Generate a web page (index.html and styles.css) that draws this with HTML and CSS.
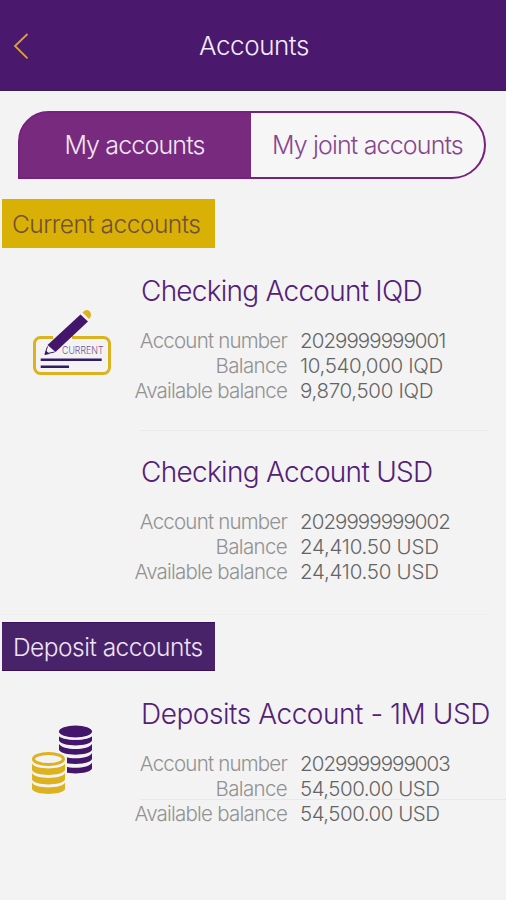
FILE: index.html
```html
<!DOCTYPE html>
<html lang="en">
<head>
<meta charset="utf-8">
<title>Accounts</title>
<link rel="stylesheet" href="styles.css">
</head>
<body>
<header class="bar">
  <svg class="back" width="18" height="28" viewBox="0 0 18 28" fill="none" stroke="#d9a23a" stroke-width="1.8"><path d="M15.500 2 3 14l12.500 12.300"/></svg>
  <h1>Accounts</h1>
</header>
<nav class="tabs">
  <a class="tab active">My accounts</a>
  <a class="tab joint">My joint accounts</a>
</nav>
<main>
  <h2 class="tag gold">Current accounts</h2>
  <section class="account first">
    <div class="icon">
      <svg width="82" height="70" viewBox="0 0 82 70">
        <path d="M22 28.500H9.500a6 6 0 0 0-6 6V58.500a6 6 0 0 0 6 6H72.500a6 6 0 0 0 6-6V34.500a6 6 0 0 0-6-6H41" fill="none" stroke="#dcb21e" stroke-width="3"/>
        <path d="M49.500 5.500 57 12.500 24.500 43 16.500 36Z" fill="#43166c"/>
        <path d="M51.500 3.500C54 0 58 0 59.500 3.500C60.500 6 60 8 58 10Z" fill="#dcb21e"/>
        <path d="M16.500 37.500 14 45 23.500 43" fill="none" stroke="#43166c" stroke-width="1"/>
        <path d="M13.500 46l1.500-4.500 3.500 3.500Z" fill="#43166c"/>
        <text x="31" y="45.300" textLength="41.500" lengthAdjust="spacingAndGlyphs" class="cheque">CURRENT</text>
        <path d="M9.700 50.700H70.700M9.700 57.700H38" stroke="#321c68" stroke-width="2.600"/>
      </svg>
    </div>
    <div class="info">
      <h3 class="n-iqd">Checking Account IQD</h3>
      <dl>
        <dt class="l-num">Account number</dt><dd class="v-num">2029999999001</dd>
        <dt class="l-bal">Balance</dt><dd class="v-iqd">10,540,000 IQD</dd>
        <dt class="l-avail">Available balance</dt><dd class="v-iqd">9,870,500 IQD</dd>
      </dl>
    </div>
  </section>
  <section class="account second">
    <div class="icon"></div>
    <div class="info">
      <h3 class="n-usd">Checking Account USD</h3>
      <dl>
        <dt class="l-num">Account number</dt><dd class="v-num">2029999999002</dd>
        <dt class="l-bal">Balance</dt><dd class="v-usd">24,410.50 USD</dd>
        <dt class="l-avail">Available balance</dt><dd class="v-usd">24,410.50 USD</dd>
      </dl>
    </div>
  </section>
  <h2 class="tag purple">Deposit accounts</h2>
  <section class="account third">
    <div class="icon coins">
      <svg width="66" height="72" viewBox="0 0 66 72">
        <g fill="#43166c">
          <ellipse cx="44.500" cy="6.500" rx="16.500" ry="6"/>
          <path id="disc" d="M28 9.500C31 16.500 58 16.500 61 9.500V15.500C58 22 31 22 28 15.500Z"/>
          <use href="#disc" y="9.300"/><use href="#disc" y="18.600"/><use href="#disc" y="28"/>
        </g>
        <g fill="none" stroke="#f3f3f3" stroke-width="1.800">
          <path id="gap" d="M27 9C31 15.500 58 15.500 62 9"/>
        </g>
        <path d="M-1 33C-1 24 36 24 36 33V72H-1Z" fill="#f3f3f3"/>
        <g fill="#dcb21e">
          <ellipse cx="17.500" cy="34" rx="15" ry="5.500" fill="#f3f3f3" stroke="#dcb21e" stroke-width="3"/>
          <path id="gold-disc" d="M1 38.500C4 45 31 45 34 38.500V45C31 51.500 4 51.500 1 45Z"/>
          <use href="#gold-disc" y="9.500"/><use href="#gold-disc" y="19"/>
        </g>
      </svg>
    </div>
    <div class="info">
      <h3 class="n-dep">Deposits Account - 1M USD</h3>
      <dl>
        <dt class="l-num">Account number</dt><dd class="v-num">2029999999003</dd>
        <dt class="l-bal">Balance</dt><dd class="v-usd-large">54,500.00 USD</dd>
        <dt class="l-avail">Available balance</dt><dd class="v-usd-large">54,500.00 USD</dd>
      </dl>
    </div>
  </section>
</main>
</body>
</html>
```
FILE: styles.css
```css
* { box-sizing: border-box; }
body { margin: 0; height: 900px; overflow: hidden; background: #f3f3f3; font-family: Inter, "Liberation Sans", sans-serif; font-weight: 300; }
h1, h2, h3, dl, dd { margin: 0; font-weight: 300; white-space: nowrap; }

.bar { display: grid; grid-template-columns: 48px 1fr 46px; align-items: center; height: 91px; background: #4a186c; border-bottom: 1px solid #392052; }
.back { margin-left: 12px; margin-top: 2px; }
h1 { padding-top: 2px; text-align: center; font-size: 26px; line-height: 36px; letter-spacing: -0.450px; color: #f3eaf8; }

.tabs { display: flex; width: 468px; height: 68px; margin: 20px 0 0 18px; border: 2px solid #762080; border-radius: 34px 38px 38px 0; background: linear-gradient(to right, #782b7e 233px, #f6f6f6 233px) border-box; color: #f3e6f5; font-size: 25px; }
.tab { display: flex; align-items: center; justify-content: center; padding-bottom: 1px; white-space: nowrap; letter-spacing: -0.850px; }
.active { width: 231px; padding-right: 2px; }
.joint { flex: 1; color: #87468d; }

.tag { display: flex; align-items: center; width: 213px; height: 49px; margin-left: 2px; padding-left: 10px; font-size: 24.500px; letter-spacing: -0.500px; }
.gold { margin-top: 20px; background: #d9b005; color: #725036; }
.purple { margin-top: 7px; padding-left: 11px; background: #482369; color: #efe4f6; border: solid #38105c; border-width: 1px 0; }

.account { display: grid; grid-template-columns: 140px 1fr; position: relative; }
.account::after { content: ""; position: absolute; right: 18px; bottom: 0; left: 140px; height: 1px; background: #e9e9e9; }
.first { height: 183px; padding-top: 25px; }
.second { height: 184px; padding-top: 23px; }
.second::after { left: 0; background: #eee; }
.third { height: 129px; padding-top: 25px; }
.third::after { right: 0; background: #e8e8e8; }
.icon { padding: 36px 0 0 31px; }
.coins { padding-top: 29px; }
.cheque { font-size: 10px; fill: #75518e; }

h3 { padding-left: 1px; font-size: 28px; line-height: 36px; color: #532177; }
.n-iqd { letter-spacing: -0.750px; }
.n-usd { letter-spacing: -0.700px; }
.n-dep { letter-spacing: -0.450px; }

dl { display: grid; grid-template-columns: 147px 1fr; column-gap: 13px; grid-auto-rows: 24.700px; align-items: center; margin-top: 20px; font-size: 20.500px; line-height: 24px; }
dt { display: flex; justify-content: flex-end; color: #929292; white-space: nowrap; }
dd { color: #656565; }
.l-num { letter-spacing: -0.800px; }
.l-bal { letter-spacing: -0.650px; }
.l-avail { letter-spacing: -0.780px; }
.v-num { letter-spacing: -0.930px; }
.v-iqd { letter-spacing: -0.330px; }
.v-usd { letter-spacing: -0.250px; }
.v-usd-large { letter-spacing: -0.500px; }
```
